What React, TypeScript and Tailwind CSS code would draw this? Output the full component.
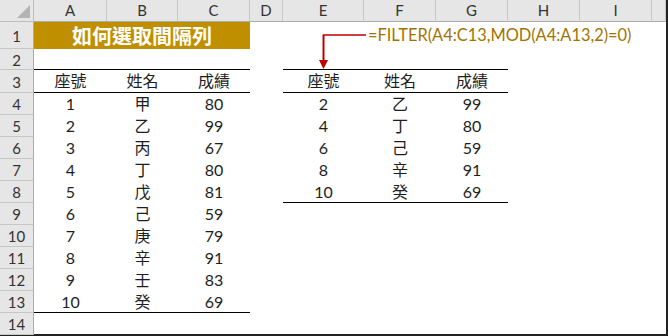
import React from 'react'

const COLS = ['A', 'B', 'C', 'D', 'E', 'F', 'G', 'H', 'I', '']

const LEFT: [number, string, number][] = [
    [1, '甲', 80], [2, '乙', 99], [3, '丙', 67], [4, '丁', 80], [5, '戊', 81],
    [6, '己', 59], [7, '庚', 79], [8, '辛', 91], [9, '壬', 83], [10, '癸', 69],
]
const RIGHT = LEFT.filter(r => r[0] % 2 === 0)
const HEAD = ['座號', '姓名', '成績']

const font = "font-['Lato','Noto_Sans_CJK_TC',sans-serif]"

function cellText(r: number, c: number): string {
    // c: 0 = A ... 9 = J
    if (r === 3 && c <= 2) return HEAD[c]
    if (r === 3 && c >= 4 && c <= 6) return HEAD[c - 4]
    if (r >= 4 && r <= 13 && c <= 2) return String(LEFT[r - 4][c])
    if (r >= 4 && r <= 8 && c >= 4 && c <= 6) return String(RIGHT[r - 4][c - 4])
    return ''
}

function borders(r: number, c: number): string {
    const inLeft = c <= 2
    const inRight = c >= 4 && c <= 6
    const cls: string[] = []
    if ((r === 2 || r === 3) && (inLeft || inRight)) cls.push('border-b border-black')
    if (r === 13 && inLeft) cls.push('border-b border-black')
    if (r === 8 && inRight) cls.push('border-b border-black')
    return cls.join(' ')
}

export default function App() {
    const rows = Array.from({ length: 14 }, (_, i) => i + 1)
    return (
        <div className="w-[668px] h-[336px] bg-white overflow-hidden">
            <div className={`relative w-[668px] h-[336px] border-r-2 border-b-2 border-[#222] grid grid-cols-[34px_73px_71px_72px_33px_81px_72px_72px_72px_72px_1fr] grid-rows-[22px_27px_21px_23px_repeat(11,22px)] ${font}`}>
                {/* corner */}
                <div className="relative bg-[#e6e6e6] border-r border-b border-[#bdbdbd]">
                    <div className="absolute right-[3px] bottom-[3px] w-0 h-0 border-l-[13px] border-l-transparent border-b-[13px] border-b-[#b4b4b4]" />
                </div>
                {COLS.map((l, i) => (
                    <div key={l + i} className="bg-[#e6e6e6] border-r border-b border-[#c6c6c6] border-b-[#ababab] flex items-center justify-center text-[15px] text-[#333]">
                        {l}
                    </div>
                ))}

                {rows.map(r => (
                    <React.Fragment key={r}>
                        <div className="bg-[#e6e6e6] border-r border-b border-[#c6c6c6] border-r-[#ababab] flex items-center justify-center text-[15px] text-[#333] pt-[2px]">
                            {r}
                        </div>
                        {r === 1 ? (
                            <>
                                <div className="col-span-3 bg-[#bf8f00] flex items-center justify-center text-white text-[20px] font-semibold">
                                    如何選取間隔列
                                </div>
                                <div />
                                <div className="col-span-6 flex items-center pl-[85px] text-[16.4px] text-[#a27300] whitespace-nowrap">
                                    =FILTER(A4:C13,MOD(A4:A13,2)=0)
                                </div>
                            </>
                        ) : (
                            COLS.map((_, c) => (
                                <div key={c} className={`flex items-center justify-center text-[16px] text-[#1e1e1e] ${borders(r, c)}`}>
                                    {cellText(r, c)}
                                </div>
                            ))
                        )}
                    </React.Fragment>
                ))}

                <svg className="absolute left-[316px] top-[30px]" width="56" height="42" viewBox="0 0 56 42">
                    <path d="M7.5 5 H50" stroke="#c00000" strokeWidth="1.5" fill="none" />
                    <path d="M7.5 4.5 V31" stroke="#c00000" strokeWidth="2" fill="none" />
                    <path d="M3 30 H12 L7.5 39 Z" fill="#c00000" />
                </svg>
            </div>
        </div>
    )
}
